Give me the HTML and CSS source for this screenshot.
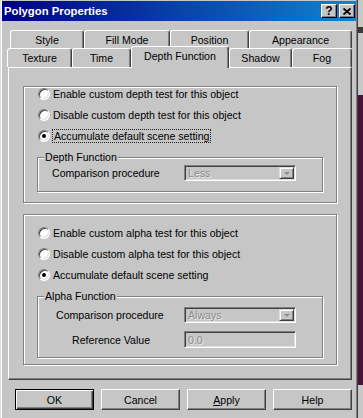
FILE: index.html
```html
<!DOCTYPE html>
<html lang="en">
<head>
    <meta charset="UTF-8">
    <meta name="viewport" content="width=device-width, initial-scale=1.0">
    <title>Polygon Properties</title>
    <link rel="stylesheet" href="styles.css">
</head>
<body>
    <div class="window">
        <div class="titlebar">
            <span class="title">Polygon Properties</span>
            <div class="title-buttons">
                <span class="tbtn help">?</span>
                <span class="tbtn">
                    <svg width="8" height="7" viewBox="0 0 8 7">
                        <path d="M0.5 0.5 L7.5 6.5 M7.5 0.5 L0.5 6.5" stroke="#000" stroke-width="1.8"/>
                    </svg>
                </span>
            </div>
        </div>

        <div class="tabs">
            <div class="tabrow back">
                <div class="tab w-style">Style</div>
                <div class="tab w-fill">Fill Mode</div>
                <div class="tab w-position">Position</div>
                <div class="tab w-appearance">Appearance</div>
            </div>
            <div class="tabrow front">
                <div class="tab w-texture">Texture</div>
                <div class="tab w-time">Time</div>
                <div class="tab w-depth selected">Depth Function</div>
                <div class="tab w-shadow">Shadow</div>
                <div class="tab w-fog">Fog</div>
            </div>
        </div>

        <div class="panel">
            <div class="group g1">
                <div class="radio"><span class="dot"></span><span class="rtext">Enable custom depth test for this object</span></div>
                <div class="radio"><span class="dot"></span><span class="rtext">Disable custom depth test for this object</span></div>
                <div class="radio"><span class="dot checked"></span><span class="rtext focus">Accumulate default scene setting</span></div>

                <div class="sub sub1">
                    <span class="sub-title">Depth Function</span>
                    <div class="field">
                        <span class="flabel l-cmp1">Comparison procedure</span>
                        <div class="combo">
                            <span class="disabled">Less</span>
                            <span class="arrow"><span class="tri"></span></span>
                        </div>
                    </div>
                </div>
            </div>

            <div class="group g2">
                <div class="radio"><span class="dot"></span><span class="rtext">Enable custom alpha test for this object</span></div>
                <div class="radio"><span class="dot"></span><span class="rtext">Disable custom alpha test for this object</span></div>
                <div class="radio"><span class="dot checked"></span><span class="rtext">Accumulate default scene setting</span></div>

                <div class="sub sub2">
                    <span class="sub-title">Alpha Function</span>
                    <div class="field">
                        <span class="flabel l-cmp2">Comparison procedure</span>
                        <div class="combo">
                            <span class="disabled">Always</span>
                            <span class="arrow"><span class="tri"></span></span>
                        </div>
                    </div>
                    <div class="field second">
                        <span class="flabel l-ref">Reference Value</span>
                        <div class="textbox"><span class="disabled">0.0</span></div>
                    </div>
                </div>
            </div>
        </div>

        <div class="buttons">
            <div class="btn default">OK</div>
            <div class="btn">Cancel</div>
            <div class="btn"><u>A</u>pply</div>
            <div class="btn">Help</div>
        </div>
    </div>
</body>
</html>
```

FILE: styles.css
```css
body {
    margin: 0;
    padding: 0;
    font-family: "Liberation Sans", Arial, sans-serif;
    font-size: 10.6px;
    color: #000;
    background: linear-gradient(to bottom,
        #c8c8c8 0, #c8c8c8 27px,
        #3a3a3a 27px, #3a3a3a 33px,
        #c8c8c8 33px, #c8c8c8 95px,
        #4a1238 95px, #4a1238 385px,
        #c8c8c8 385px);
    height: 418px;
    overflow: hidden;
}
.window {
    box-sizing: border-box;
    width: 358px;
    height: 418px;
    background: #c6c6c6;
    border-left: 1px solid #dfdfdf;
    border-right: 1px solid #404040;
    box-shadow: inset 1px 0 #fff, inset -1px 0 #808080;
    padding: 1px 1px 0 1px;
}
.titlebar {
    height: 20px;
    display: flex;
    align-items: center;
    padding: 0 1px 0 2px;
    background: linear-gradient(to right, #000080, #1084d0);
}
.title {
    color: #fff;
    font-weight: bold;
    font-size: 11.3px;
}
.title-buttons {
    margin-left: auto;
    display: flex;
    gap: 2px;
}
.tbtn {
    box-sizing: border-box;
    width: 16px;
    height: 14px;
    display: flex;
    align-items: center;
    justify-content: center;
    background: #c6c6c6;
    border-top: 1px solid #fff;
    border-left: 1px solid #fff;
    border-right: 1px solid #000;
    border-bottom: 1px solid #000;
    box-shadow: inset -1px -1px #808080;
}
.tbtn.help {
    font-weight: bold;
    font-size: 12px;
    line-height: 12px;
}

/* tabs */
.tabs {
    margin-top: 9px;
}
.tabrow {
    display: flex;
}
.tabrow.back {
    margin-left: 8px;
    height: 18px;
}
.tabrow.front {
    margin-left: 5px;
    height: 19px;
}
.tab {
    box-sizing: border-box;
    height: 100%;
    display: flex;
    align-items: center;
    justify-content: center;
    background: #c6c6c6;
    border-top: 1px solid #fff;
    border-left: 1px solid #fff;
    border-right: 1px solid #404040;
    box-shadow: inset -1px 0 #808080;
    border-radius: 3px 3px 0 0;
}
.back .tab {
    padding-top: 1px;
}
.front .tab {
    padding-bottom: 1px;
}
.tab.selected {
    position: relative;
    z-index: 1;
    height: 22px;
    margin-top: -2px;
    padding-bottom: 4px;
}
.w-style { width: 74px; }
.w-fill { width: 86px; }
.w-position { width: 79px; }
.w-appearance { width: 103px; }
.w-texture { width: 65px; }
.w-time { width: 59px; }
.w-depth { width: 98px; }
.w-shadow { width: 63px; }
.w-fog { width: 60px; }

/* panel */
.panel {
    box-sizing: border-box;
    width: 344px;
    height: 313px;
    margin-left: 6px;
    padding: 18px 0 0 14px;
    border-top: 1px solid #fff;
    border-left: 1px solid #fff;
    border-right: 1px solid #404040;
    border-bottom: 1px solid #404040;
    box-shadow: inset -1px -1px #808080;
}
.group {
    box-sizing: border-box;
    width: 314px;
    padding-left: 13px;
    border: 1px solid #808080;
    box-shadow: 1px 1px 0 #fff, inset 1px 1px 0 #fff;
}
.g1 {
    height: 117px;
}
.g2 {
    height: 151px;
    margin-top: 11px;
    padding-top: 11px;
}
.radio {
    display: flex;
    align-items: center;
    height: 13px;
    padding-left: 1px;
}
.radio + .radio {
    margin-top: 8px;
}
.dot {
    box-sizing: border-box;
    position: relative;
    width: 12px;
    height: 12px;
    border-radius: 50%;
    background: #fff;
    border: 1px solid;
    border-color: #808080 #fff #fff #808080;
    box-shadow: inset 1px 1px #404040, inset -1px -1px #dfdfdf;
    margin-right: 3px;
}
.dot.checked::after {
    content: "";
    position: absolute;
    left: 3px;
    top: 3px;
    width: 4px;
    height: 4px;
    border-radius: 50%;
    background: #000;
}
.rtext.focus {
    margin-left: -1px;
    padding: 0 1px;
    border: 1px dotted #222;
    line-height: 12px;
}

/* sub groups */
.sub {
    position: relative;
    box-sizing: border-box;
    width: 286px;
    margin-top: 15px;
    border: 1px solid #808080;
    box-shadow: 1px 1px 0 #fff, inset 1px 1px 0 #fff;
}
.sub1 {
    height: 35px;
    padding: 7px 0 0 14px;
}
.sub2 {
    height: 62px;
    padding: 10px 0 0 18px;
}
.sub-title {
    position: absolute;
    top: -7px;
    left: 6px;
    padding: 0 1px;
    line-height: 13px;
    background: #c6c6c6;
}
.field {
    display: flex;
    align-items: center;
}
.field.second {
    margin-top: 8px;
}
.l-cmp1 { width: 132px; }
.l-cmp2 { width: 128px; }
.l-ref {
    width: 112px;
    padding-left: 16px;
    box-sizing: border-box;
    width: 128px;
}
.combo, .textbox {
    box-sizing: border-box;
    width: 112px;
    height: 16px;
    display: flex;
    align-items: center;
    padding-left: 3px;
    border-top: 1px solid #808080;
    border-left: 1px solid #808080;
    border-bottom: 1px solid #fff;
    border-right: 1px solid #fff;
    box-shadow: inset 1px 1px #404040, inset -1px -1px #dfdfdf;
}
.textbox {
    height: 17px;
}
.disabled {
    color: #8c8c8c;
    text-shadow: 1px 1px 0 #e8e8e8;
}
.arrow {
    box-sizing: border-box;
    margin-left: auto;
    margin-right: 1px;
    width: 15px;
    height: 12px;
    display: flex;
    align-items: center;
    justify-content: center;
    border-top: 1px solid #dfdfdf;
    border-left: 1px solid #dfdfdf;
    border-right: 1px solid #404040;
    border-bottom: 1px solid #404040;
    box-shadow: inset 1px 1px #fff, inset -1px -1px #808080;
}
.tri {
    width: 0;
    height: 0;
    border-left: 3px solid transparent;
    border-right: 3px solid transparent;
    border-top: 3px solid #8c8c8c;
}

/* bottom buttons */
.buttons {
    display: flex;
    gap: 7px;
    margin: 9px 0 0 13px;
}
.btn {
    box-sizing: border-box;
    width: 79px;
    height: 21px;
    display: flex;
    align-items: center;
    justify-content: center;
    border-top: 1px solid #fff;
    border-left: 1px solid #fff;
    border-right: 1px solid #404040;
    border-bottom: 1px solid #404040;
    box-shadow: inset -1px -1px #808080;
}
.btn.default {
    border: 1px solid #000;
    box-shadow: inset 1px 1px #fff, inset -1px -1px #404040, inset -2px -2px #808080;
}
```
